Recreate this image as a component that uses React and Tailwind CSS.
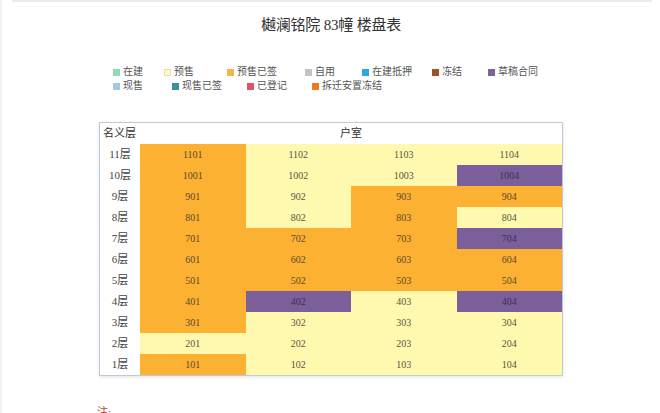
const legendRows = [
  [
    { label: "在建", color: "#8fdcb4", w: "w-[51px]" },
    { label: "预售", color: "#fff8c6", w: "w-[63px]", ring: true },
    { label: "预售已签", color: "#f6b448", w: "w-[78px]" },
    { label: "自用", color: "#c4c4c4", w: "w-[57px]" },
    { label: "在建抵押", color: "#2ba6de", w: "w-[70px]" },
    { label: "冻结", color: "#9f5228", w: "w-[56px]" },
    { label: "草稿合同", color: "#7c6399", w: "" },
  ],
  [
    { label: "现售", color: "#a3c9e1", w: "w-[59px]" },
    { label: "现售已签", color: "#3d8ea6", w: "w-[75px]" },
    { label: "已登记", color: "#e2506a", w: "w-[65px]" },
    { label: "拆迁安置冻结", color: "#f07b1f", w: "" },
  ],
];

// O = 预售已签, Y = 预售, P = 草稿合同
const floors = [
  [11, "OYYY"],
  [10, "OYYP"],
  [9, "OYOO"],
  [8, "OYOY"],
  [7, "OOOP"],
  [6, "OOOO"],
  [5, "OOOO"],
  [4, "OPYP"],
  [3, "OYYY"],
  [2, "YYYY"],
  [1, "OYYY"],
];

const cellClass = {
  O: "bg-[#fcb133] text-[#5b4a2c]",
  Y: "bg-[#fff9b0] text-[#5b5440]",
  P: "bg-[#7a5f9a] text-[#3e3058]",
};

const font = { fontFamily: '"Liberation Serif", "Noto Sans CJK SC", serif' };

const LegendItem = ({ item }) => (
  <div className={`flex items-center gap-[3px] ${item.w}`}>
    <span
      className={`w-[7px] h-[7px] shrink-0 ${item.ring ? "border border-[#e6dfa8]" : ""}`}
      style={{ backgroundColor: item.color }}
    />
    <span className="text-[10px] leading-[14px] text-[#555] whitespace-nowrap">{item.label}</span>
  </div>
);

export default function App() {
  return (
    <div className="w-[660px] h-[413px] bg-white overflow-hidden border-l-2 border-[#f1f1f1]" style={font}>
      {/* card edge from the page above */}
      <div className="ml-[10px] mr-[8px] h-[2px] bg-[#ebebeb]" />
      <div className="ml-[14px] mr-[10px] mt-[4px] h-px bg-[#f5f5f5]" />

      <div className="h-[37px] flex items-center justify-center">
        <h1 className="text-[15px] text-[#333] tracking-[-0.2px]">樾澜铭院 83幢 楼盘表</h1>
      </div>

      <div className="mt-[21px] ml-[111px] flex flex-col">
        {legendRows.map((row, i) => (
          <div key={i} className="flex">
            {row.map((item) => (
              <LegendItem key={item.label} item={item} />
            ))}
          </div>
        ))}
      </div>

      <div className="mt-[29px] ml-[97px] w-[464px] border border-[#bccbdb] shadow-[0_1px_3px_rgba(0,0,0,0.12)]">
        <div className="grid grid-cols-[40px_1fr] h-[21px] items-center text-[11px] text-[#333]">
          <span className="pl-[3px]">名义层</span>
          <span className="text-center">户室</span>
        </div>
        {floors.map(([floor, pattern]) => (
          <div key={floor} className="grid grid-cols-[40px_repeat(4,1fr)] h-[21px]">
            <div className="flex items-center justify-center text-[11px] text-[#444]">{floor}层</div>
            {pattern.split("").map((s, i) => (
              <div key={i} className={`flex items-center justify-center text-[10px] ${cellClass[s]}`}>
                {floor * 100 + i + 1}
              </div>
            ))}
          </div>
        ))}
      </div>

      <p className="mt-[28px] ml-[95px] text-[11px] text-[#c0392b]">注:</p>
    </div>
  );
}
